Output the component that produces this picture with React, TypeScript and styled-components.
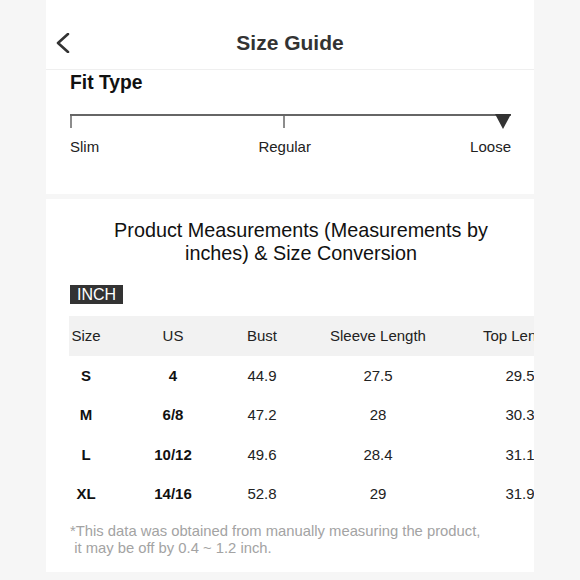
import React from "react";
import styled, { createGlobalStyle } from "styled-components";

const Global = createGlobalStyle`
  html, body { margin: 0; padding: 0; background: #f6f6f6; }
  body { font-family: "Liberation Sans", Arial, sans-serif; color: #222; }
`;

const Page = styled.div`
  width: 488px;
  margin-left: 46px;
  display: flex;
  flex-direction: column;
  padding-bottom: 7px;
`;

const Header = styled.header`
  height: 70px;
  box-sizing: border-box;
  padding-top: 16px;
  background: #fff;
  border-bottom: 1px solid #efefef;
  display: grid;
  grid-template-columns: 50px 1fr 50px;
  align-items: center;
`;

const BackButton = styled.button`
  border: 0;
  background: none;
  padding: 0 0 0 10px;
  height: 24px;
  display: flex;
  align-items: center;
  cursor: pointer;
`;

const Title = styled.h1`
  margin: 0;
  text-align: center;
  font-size: 21px;
  font-weight: 700;
  color: #333;
`;

const Card = styled.section<{ $pad: string; $gap?: number }>`
  background: #fff;
  padding: ${(p) => p.$pad};
  margin-top: ${(p) => p.$gap ?? 0}px;
  display: flex;
  flex-direction: column;
`;

const FitTitle = styled.h2`
  margin: 0;
  font-size: 19.3px;
  line-height: 22px;
  font-weight: 700;
  color: #111;
`;

const Scale = styled.div`
  margin-top: 20px;
  width: 441px;
  display: flex;
  flex-direction: column;
`;

const Labels = styled.div`
  display: flex;
  justify-content: space-between;
  margin-top: 8px;
  font-size: 15px;
  line-height: 18px;
  color: #222;
`;

const SectionTitle = styled.h3`
  margin: 0;
  padding: 0 0 0 22px;
  text-align: center;
  font-size: 19.8px;
  line-height: 23px;
  font-weight: 400;
  color: #111;
`;

const Badge = styled.span`
  align-self: flex-start;
  margin-top: 20px;
  background: #333;
  color: #fff;
  font-size: 16px;
  line-height: 19px;
  padding: 0 7px;
`;

const TableWrap = styled.div`
  margin-top: 12px;
  margin-right: -24px;
  margin-left: -1px;
  overflow: hidden;
`;

const Table = styled.div`
  width: 496px;
  display: flex;
  flex-direction: column;
`;

const Row = styled.div<{ $head?: boolean }>`
  height: 39.5px;
  display: grid;
  grid-template-columns: 34px 140px 38px 194px 90px;
  align-items: center;
  background: ${(p) => (p.$head ? "#f2f2f2" : "transparent")};
`;

const Cell = styled.div<{ $bold?: boolean }>`
  text-align: center;
  white-space: nowrap;
  font-size: 15px;
  font-weight: ${(p) => (p.$bold ? 700 : 400)};
  color: ${(p) => (p.$bold ? "#111" : "#222")};
`;

const Note = styled.p`
  margin: 9px 0 0;
  font-size: 14.8px;
  line-height: 17px;
  color: #a3a3a3;
  white-space: pre-wrap;
`;

const head = ["Size", "US", "Bust", "Sleeve Length", "Top Length"];
const rows = [
  ["S", "4", "44.9", "27.5", "29.5"],
  ["M", "6/8", "47.2", "28", "30.3"],
  ["L", "10/12", "49.6", "28.4", "31.1"],
  ["XL", "14/16", "52.8", "29", "31.9"],
];

export default function App() {
  return (
    <>
      <Global />
      <Page>
        <Header>
          <BackButton aria-label="Back">
            <svg width="14" height="20" viewBox="0 0 14 20">
              <polyline points="12,1 2,10 12,19" fill="none" stroke="#333" strokeWidth="2.6" strokeLinecap="round" strokeLinejoin="round" />
            </svg>
          </BackButton>
          <Title>Size Guide</Title>
          <span />
        </Header>
        <Card $pad="2px 24px 0 24px" style={{ height: 122 }}>
          <FitTitle>Fit Type</FitTitle>
          <Scale>
            <svg width="441" height="16" viewBox="0 0 441 16">
              <line x1="0" y1="1" x2="441" y2="1" stroke="#666" strokeWidth="2" />
              <line x1="1" y1="0" x2="1" y2="14" stroke="#666" strokeWidth="1.5" />
              <line x1="214" y1="0" x2="214" y2="14" stroke="#666" strokeWidth="1.5" />
              <polygon points="425,0 441,0 433,15" fill="#333" />
            </svg>
            <Labels>
              <span>Slim</span>
              <span>Regular</span>
              <span>Loose</span>
            </Labels>
          </Scale>
        </Card>
        <Card $pad="20px 24px 15px 24px" $gap={5}>
          <SectionTitle>Product Measurements (Measurements by inches) &amp; Size Conversion</SectionTitle>
          <Badge>INCH</Badge>
          <TableWrap>
            <Table>
              <Row $head>
                {head.map((h) => (
                  <Cell key={h}>{h}</Cell>
                ))}
              </Row>
              {rows.map((r) => (
                <Row key={r[0]}>
                  {r.map((v, i) => (
                    <Cell key={i} $bold={i < 2}>
                      {v}
                    </Cell>
                  ))}
                </Row>
              ))}
            </Table>
          </TableWrap>
          <Note>{"*This data was obtained from manually measuring the product,\n it may be off by 0.4 ~ 1.2 inch."}</Note>
        </Card>
      </Page>
    </>
  );
}
